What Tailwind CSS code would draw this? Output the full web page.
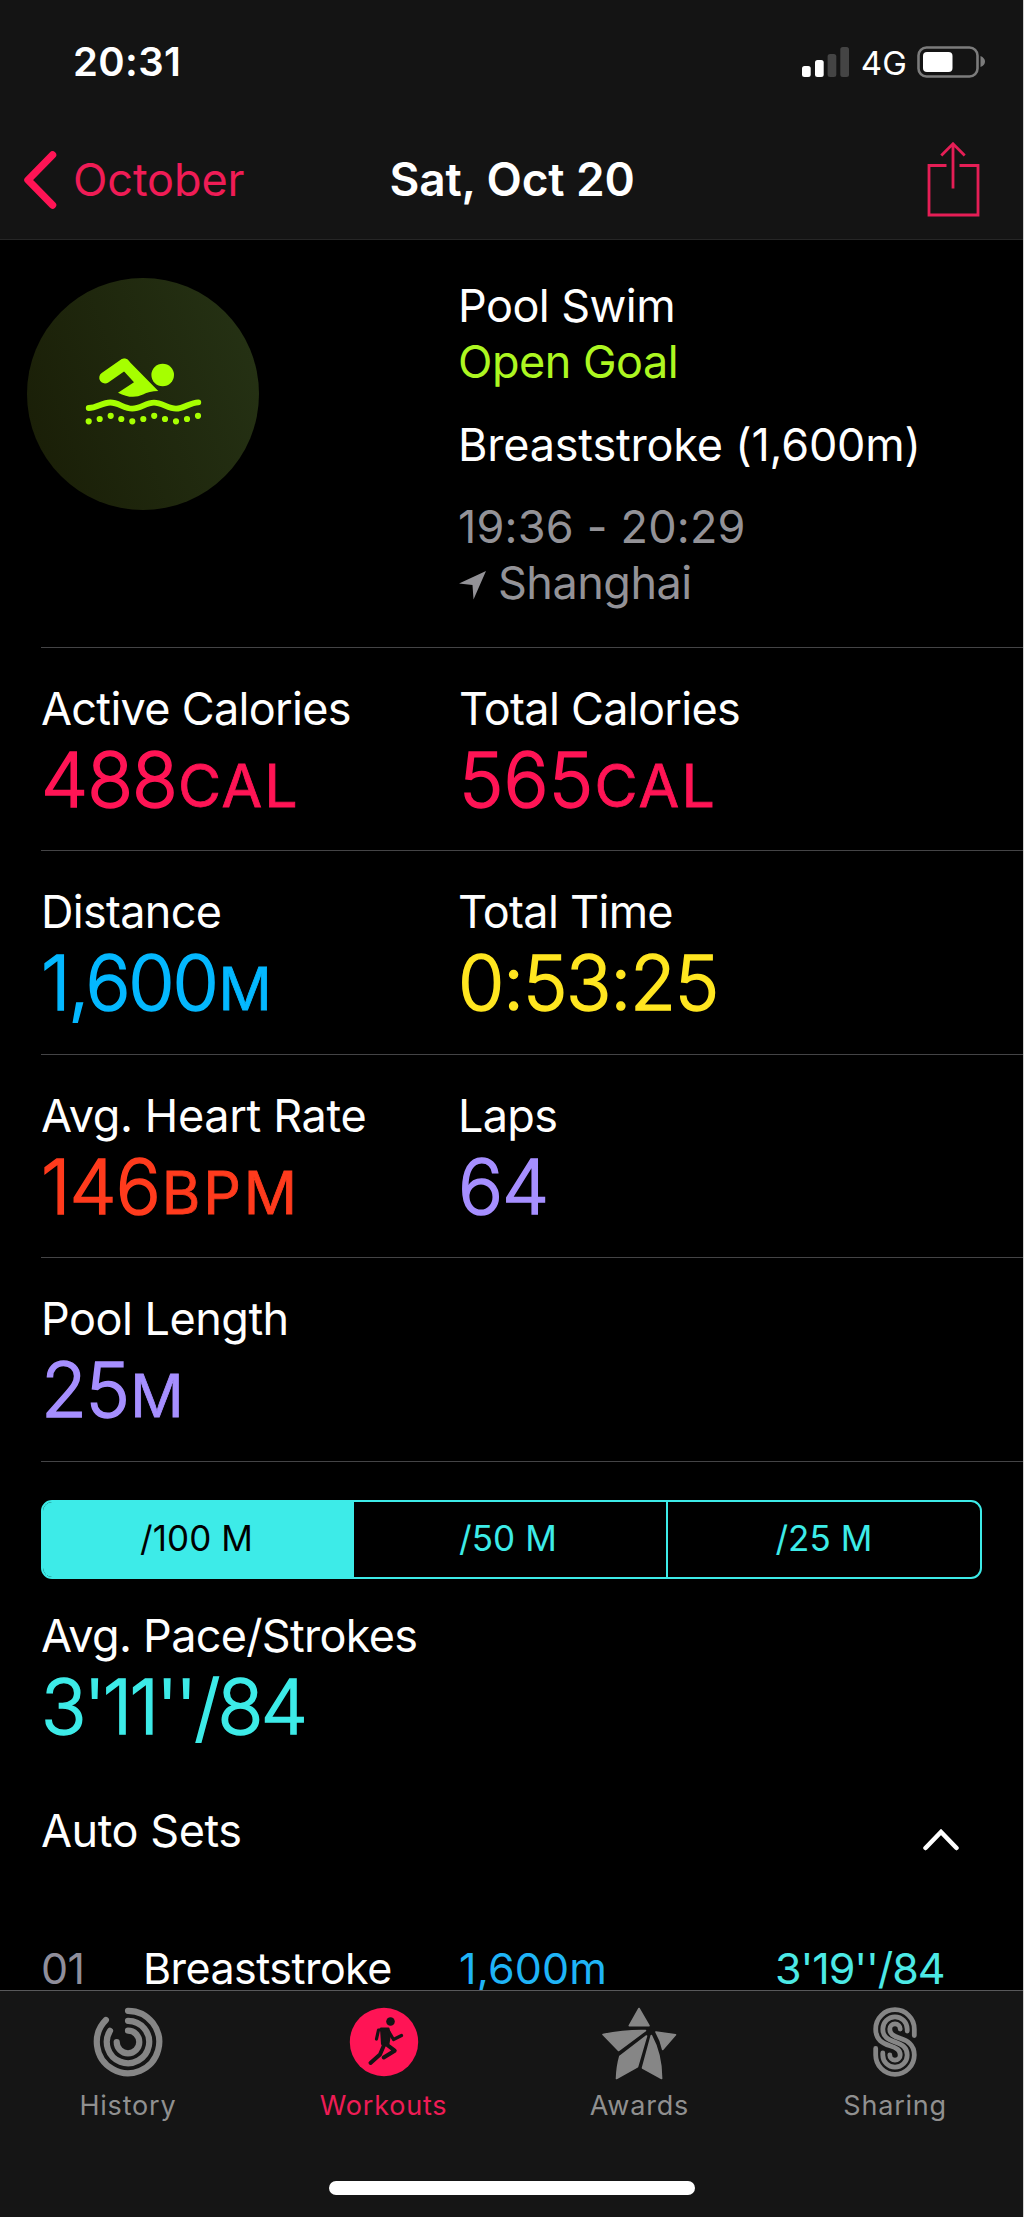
<!DOCTYPE html>
<html lang="en">
<head>
    <meta charset="UTF-8">
    <meta name="viewport" content="width=device-width, initial-scale=1.0">
    <title>Pool Swim - Sat, Oct 20</title>
    <script src="https://cdn.jsdelivr.net/npm/@tailwindcss/browser@4"></script>
</head>
<body class="bg-black text-white font-[Inter,sans-serif]">
    <div class="w-[1024px] h-[2217px] flex flex-col overflow-hidden border-r border-[#d4d4d4]">
        <!-- Status bar + navigation -->
        <header class="h-60 shrink-0 bg-[#141414] border-b border-[#262626]">
            <div class="h-[130px] pt-[42px] pl-[73px] pr-[37px] flex justify-between items-start">
                <span class="text-[40px] leading-10 font-semibold tracking-[0.4px]">20:31</span>
                <div class="flex items-start">
                    <svg class="w-[48px] h-[31px] mt-[4px] mr-[11px]" viewBox="0 0 48 31">
                        <rect x="0" y="20" width="8.7" height="11" rx="2.5" fill="#fff"/>
                        <rect x="13" y="14" width="8.7" height="17" rx="2.5" fill="#fff"/>
                        <rect x="25.6" y="8" width="8.7" height="23" rx="2.5" fill="#444"/>
                        <rect x="38.3" y="1" width="8.7" height="30" rx="2.5" fill="#444"/>
                    </svg>
                    <span class="mr-[10px] text-[33px] leading-[42px] tracking-[0.2px]">4G</span>
                    <svg class="w-[69px] h-[32px] mt-[4px]" viewBox="0 0 69 32">
                        <rect x="1.5" y="1.5" width="59" height="29" rx="8" fill="none" stroke="#7c7c7c" stroke-width="2.6"/>
                        <rect x="6" y="6" width="29.5" height="20" rx="4" fill="#fff"/>
                        <path d="M63.500 10q4.500 2 4.500 5.500t-4.500 5.500z" fill="#7c7c7c"/>
                    </svg>
                </div>
            </div>
            <div class="h-[109px] pl-[23px] pr-[43px] grid grid-cols-[1fr_auto_1fr] items-start">
                <div class="flex items-center text-[#ff1455] pt-[20px]">
                    <svg class="w-[34px] h-[60px]" viewBox="0 0 34 60" fill="none" stroke="currentColor" stroke-width="7.500" stroke-linecap="round" stroke-linejoin="round">
                        <path d="M29.500 5L5 30l24.500 25"/>
                    </svg>
                    <span class="ml-[16px] text-[45px] leading-[60px] tracking-[-0.1px] text-[#ef1c56]">October</span>
                </div>
                <h1 class="ml-[21px] mt-[19px] text-[46px] leading-[60px] font-semibold tracking-[-0.15px]">Sat, Oct 20</h1>
                <svg class="w-[54px] h-[76px] mt-[12px] justify-self-end" viewBox="0 0 54 76" fill="none" stroke="#e51e56" stroke-width="2.800">
                    <path d="M20.500 23.500H3v49.500h49V23.500H33.500M27 2v44.500M15.300 13.500L27 1.800 38.700 13.500"/>
                </svg>
            </div>
        </header>

        <main class="h-[1750px] shrink-0 overflow-hidden">
            <!-- Summary -->
            <section class="h-[407px] pt-[38px] pl-[27px] flex">
                <div class="size-[232px] rounded-full bg-linear-[70deg] from-[#191d06] to-[#263315] flex justify-center">
                    <svg class="w-[120px] h-[72px] mt-[77px]" viewBox="0 0 120 72" fill="#a6ff00">
                        <path d="M22 22.700L41.300 9.200" stroke="#a6ff00" stroke-width="11.500" stroke-linecap="round"/>
                        <path d="M37 5.500Q41.500 1.500 46 6.300L75.300 36Q66 36 60 39.500Q49 45 35 37.700L51 27.300L37 12z"/>
                        <circle cx="79.700" cy="20" r="11.300"/>
                        <path d="M5.700 53C14 53 19 47.500 27.300 47.500S41 53.600 49.300 53.600S63 47.600 71 47.600S85 53.600 93 53.600S107 47.500 115.300 47.300" fill="none" stroke="#a6ff00" stroke-width="5.800" stroke-linecap="round"/>
                        <path d="M5.700 66.300h0M16.700 64h0M27.700 60.800h0M38.300 64h0M49.300 66.300h0M60.300 64h0M71.200 60.800h0M82 64h0M93 66.300h0M104 64h0M115 60.800h0" stroke="#a6ff00" stroke-width="6.200" stroke-linecap="round"/>
                    </svg>
                </div>
                <div class="ml-[199px] text-[45px] leading-[55.5px] whitespace-nowrap">
                    <p class="tracking-[-0.55px]">Pool Swim</p>
                    <p class="tracking-[-0.5px] text-[#adf721]">Open Goal</p>
                    <p class="mt-[27.5px] tracking-[-0.2px]">Breaststroke (1,600m)</p>
                    <div class="mt-[27px] text-[#939297]">
                        <p class="tracking-[0.2px]">19:36 - 20:29</p>
                        <p class="flex tracking-[-0.5px]">
                            <svg class="w-[28px] h-[30px] mt-[15px] mr-[12px]" viewBox="0 0 28 30" fill="currentColor">
                                <path d="M28 1L15.500 29.500 14.500 15 1 13.500z"/>
                            </svg>Shanghai
                        </p>
                    </div>
                </div>
            </section>

            <!-- Stats -->
            <section class="ml-[41px] border-t border-[#444446] text-[45px] leading-14 tracking-[-0.7px]">
                <div class="h-[203.3px] pt-[33px] grid grid-cols-[418px_1fr] border-b border-[#444446]">
                    <div>
                        <p>Active Calories</p>
                        <p class="mt-[3px] text-[75px] leading-20 font-light tracking-[-1px] text-[#ff1455] [-webkit-text-stroke:1.5px_currentColor] [stroke-linejoin:round]">488<span class="ml-[1px] text-[59px] font-normal tracking-[1.8px] [-webkit-text-stroke-width:0.8px]">CAL</span></p>
                    </div>
                    <div>
                        <p>Total Calories</p>
                        <p class="mt-[3px] text-[75px] leading-20 font-light tracking-[0.1px] text-[#ff1455] [-webkit-text-stroke:1.5px_currentColor] [stroke-linejoin:round]">565<span class="ml-[1px] text-[59px] font-normal tracking-[2.2px] [-webkit-text-stroke-width:0.8px]">CAL</span></p>
                    </div>
                </div>
                <div class="h-[203.3px] pt-[33px] grid grid-cols-[417px_1fr] border-b border-[#444446]">
                    <div>
                        <p>Distance</p>
                        <p class="mt-[3px] text-[75px] leading-20 font-light tracking-[-2.2px] text-[#04b8ff] [-webkit-text-stroke:1.5px_currentColor] [stroke-linejoin:round]">1,600<span class="ml-[2px] text-[59px] font-normal [-webkit-text-stroke-width:0.8px]">M</span></p>
                    </div>
                    <div>
                        <p>Total Time</p>
                        <p class="mt-[3px] text-[75px] leading-20 font-light tracking-[-1.3px] text-[#ffe620] [-webkit-text-stroke:1.5px_currentColor] [stroke-linejoin:round]">0:53:25</p>
                    </div>
                </div>
                <div class="h-[203.3px] pt-[33px] grid grid-cols-[417px_1fr] border-b border-[#444446]">
                    <div>
                        <p class="tracking-[-0.35px]">Avg. Heart Rate</p>
                        <p class="mt-[3px] text-[75px] leading-20 font-light tracking-[-1px] text-[#ff3b1d] [-webkit-text-stroke:1.5px_currentColor] [stroke-linejoin:round]">146<span class="ml-[2px] text-[59px] font-normal tracking-[2.8px] [-webkit-text-stroke-width:0.8px]">BPM</span></p>
                    </div>
                    <div>
                        <p>Laps</p>
                        <p class="mt-[3px] text-[75px] leading-20 font-light tracking-[-1px] text-[#a68fff] [-webkit-text-stroke:1.5px_currentColor] [stroke-linejoin:round]">64</p>
                    </div>
                </div>
                <div class="h-[204px] pt-[33px] border-b border-[#444446]">
                    <p class="tracking-[-0.5px]">Pool Length</p>
                    <p class="mt-[3px] text-[75px] leading-20 font-light tracking-[-1.6px] text-[#a68fff] [-webkit-text-stroke:1.5px_currentColor] [stroke-linejoin:round]">25<span class="ml-[2px] text-[59px] font-normal [-webkit-text-stroke-width:0.8px]">M</span></p>
                </div>
            </section>

            <!-- Pace -->
            <section class="pl-[41px] pr-[40px] tracking-[-0.7px]">
                <div class="mt-[38px] h-[79px] w-[941px] flex rounded-[11px] border-2 border-[#3debe8] overflow-hidden text-[35px] leading-[73px] text-center text-[#3debe8] tracking-[0.1px]">
                    <div class="w-[311px] bg-[#3debe8] text-black pr-1">/100 M</div>
                    <div class="w-[312px] pr-1">/50 M</div>
                    <div class="flex-1 border-l-2 border-[#3debe8]">/25 M</div>
                </div>
                <p class="mt-[29px] text-[45px] leading-14">Avg. Pace/Strokes</p>
                <p class="mt-[3px] text-[75px] leading-20 font-light tracking-[-2.8px] text-[#3debe8] [-webkit-text-stroke:1.5px_currentColor] [stroke-linejoin:round]">3'11''/84</p>
                <div class="mt-[56px] flex justify-between">
                    <h2 class="text-[45px] leading-14 tracking-[-0.45px]">Auto Sets</h2>
                    <svg class="w-[36px] h-[24px] mt-[25px] mr-[24px]" viewBox="0 0 36 24" fill="none" stroke="#fff" stroke-width="4.500" stroke-linecap="round">
                        <path d="M2.500 20L18 4l15.500 16"/>
                    </svg>
                </div>
                <div class="mt-[81px] grid grid-cols-[102px_316px_316px_auto] text-[43px] leading-14">
                    <span class="text-[#8f8e9b]">01</span>
                    <span class="tracking-[-0.55px]">Breaststroke</span>
                    <span class="text-[#1fb4f7] tracking-[0.1px]">1,600m</span>
                    <span class="text-[#4ce9e6] tracking-[-1.1px]">3'19''/84</span>
                </div>
            </section>
        </main>

        <!-- Tab bar -->
        <footer class="h-[227px] shrink-0 bg-[#151515] border-t border-[#58585a]">
            <nav class="h-[190px] pt-[13px] grid grid-cols-4 justify-items-center text-[27px] leading-8 tracking-[0.8px] text-[#909090]">
                <div class="flex flex-col items-center gap-[10px]">
                    <svg class="size-[76px]" viewBox="0 0 76 76" fill="none" stroke="#868686" stroke-width="6.200" stroke-linecap="round">
                        <path d="M38 6.800A31.200 31.200 0 1 1 15.900 16"/>
                        <path d="M38 16.800A21.200 21.200 0 1 1 20 26.800"/>
                        <path d="M38 26.700A11.300 11.300 0 1 1 26.700 38"/>
                    </svg>
                    <span>History</span>
                </div>
                <div class="flex flex-col items-center gap-[10px] text-[#ef1c56]">
                    <svg class="size-[76px]" viewBox="0 0 76 76">
                        <circle cx="38" cy="38" r="34.200" fill="#ff1455"/>
                        <circle cx="44.500" cy="17.500" r="4.300" fill="#141414"/>
                        <path d="M35 24.500h7.500l1.500 6-1.500 9-5 2.500-1.500-2z" fill="#141414" stroke="#141414" stroke-width="2" stroke-linejoin="round"/>
                        <g fill="none" stroke="#141414" stroke-linecap="round" stroke-linejoin="round">
                            <path d="M39 25.500l-6.500.5-2 9" stroke-width="3.200"/>
                            <path d="M43 28l4.500 7.500 8-4" stroke-width="3.200"/>
                            <path d="M38.500 40l-4.500 10.500-9.500 8.500" stroke-width="4"/>
                            <path d="M40 40l8.700 6.700-11 6.800" stroke-width="4"/>
                        </g>
                    </svg>
                    <span>Workouts</span>
                </div>
                <div class="flex flex-col items-center gap-[10px]">
                    <svg class="size-[76px] overflow-visible" viewBox="0 0 76 76" fill="#868686" stroke="#868686" stroke-width="1.600" stroke-linejoin="round">
                        <path d="M38 4.500L48 21.700H28.300z"/>
                        <path d="M2 30.500Q24 26 44.500 26.500L17.500 46.500z"/>
                        <path d="M55 28L74.500 30.800 61.700 45.500Q59.500 35.500 55 28z"/>
                        <path d="M45.500 32L36.500 62.800 15.500 74.500Q16 62 18.800 52.500z"/>
                        <path d="M50.300 31.500Q60.500 50 60.600 74.500L41.500 64z"/>
                    </svg>
                    <span>Awards</span>
                </div>
                <div class="flex flex-col items-center gap-[10px]">
                    <svg class="size-[76px]" viewBox="0 0 76 76" fill="none" stroke="#868686" stroke-width="4.800" stroke-linecap="round">
                        <path d="M57.300 31.500V25A19.300 19.300 0 0 0 18.700 25C18.700 36 26 39.500 33 41.700S43.200 46 43.200 51A5.200 5.200 0 0 1 32.800 51"/>
                        <path d="M50.200 27V25A12.200 12.200 0 0 0 25.800 25C25.800 33 31 35.500 38 38S50.200 43 50.200 51A12.200 12.200 0 0 1 25.800 51V49"/>
                        <path d="M43.200 25A5.200 5.200 0 0 0 32.800 25C32.800 30 36 32 43 34.300S57.300 40 57.300 51A19.300 19.300 0 0 1 18.700 51V44.500"/>
                    </svg>
                    <span>Sharing</span>
                </div>
            </nav>
            <div class="mx-auto w-[366px] h-[14px] rounded-full bg-white"></div>
        </footer>
    </div>
</body>
</html>
